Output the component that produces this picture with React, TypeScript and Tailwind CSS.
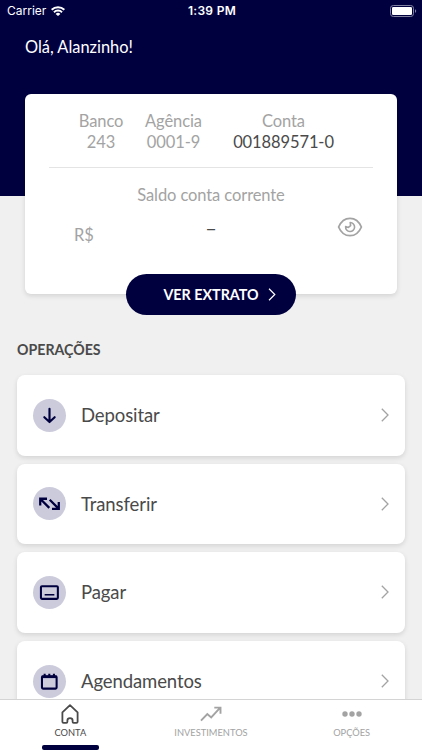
import type { ReactNode } from 'react';

const ChevronRight = ({ className }: { className: string }) => (
  <svg viewBox="0 0 8 14" fill="none" stroke="currentColor" strokeWidth="1.3" className={className}>
    <path d="M0.8 0.8 7 7 0.8 13.2" />
  </svg>
);

const WifiIcon = () => (
  <svg viewBox="0 0 14 10" fill="currentColor" className="h-[10px] w-[14px]">
    <path d="M0 3.1a10 10 0 0 1 14 0L12.7 4.5a8.1 8.1 0 0 0-11.4 0Z" />
    <path d="M2.3 5.5a6.7 6.7 0 0 1 9.4 0L10.4 6.9a4.8 4.8 0 0 0-6.8 0Z" />
    <path d="M4.6 7.9a3.4 3.4 0 0 1 4.8 0L7 10Z" />
  </svg>
);

const BatteryIcon = () => (
  <svg viewBox="0 0 27 12" fill="none" className="h-[12px] w-[27px]">
    <rect x="0.5" y="0.5" width="23" height="11" rx="2.8" stroke="#8080a0" />
    <rect x="2" y="2" width="20" height="8" rx="1.3" fill="#fff" />
    <path d="M25 4.2c1.6.5 1.6 3.1 0 3.6Z" fill="#8080a0" />
  </svg>
);

const EyeIcon = () => (
  <svg viewBox="0 0 26 20" fill="none" stroke="currentColor" strokeWidth="1.8" strokeLinejoin="round" className="h-[20px] w-[26px]">
    <path d="M1.6 10C4 4.3 8 1.3 13 1.3S22 4.3 24.4 10C22 15.7 18 18.7 13 18.7S4 15.7 1.6 10Z" />
    <path d="M13.2 5.5A4.5 4.5 0 1 1 8.6 9.6L11.4 10.4 13.6 8.6Z" strokeWidth="1.6" />
  </svg>
);

const DepositIcon = () => (
  <svg viewBox="0 0 32 32" fill="none" stroke="currentColor" strokeWidth="2.1" strokeLinecap="round" strokeLinejoin="round" className="size-[33px]">
    <path d="M16 9.5V22M11 17.7 16 22.3 21 17.7" />
  </svg>
);

const TransferIcon = () => (
  <svg viewBox="0 0 32 32" fill="none" stroke="currentColor" strokeWidth="2.2" className="size-[33px]">
    <path d="M7 18V11.4H13.6M7.2 11.6 15.8 20.2" />
    <path d="M16.2 12.4 24.8 21M18.4 21.2H25V14.6" />
  </svg>
);

const PayIcon = () => (
  <svg viewBox="0 0 32 32" fill="none" stroke="currentColor" strokeWidth="2" className="size-[33px]">
    <rect x="7.7" y="10" width="16.4" height="12.2" rx="1" />
    <path d="M11.3 18.2H20.7" strokeWidth="1.5" />
  </svg>
);

const ScheduleIcon = () => (
  <svg viewBox="0 0 32 32" fill="none" stroke="currentColor" strokeWidth="2" className="size-[33px]">
    <rect x="8.7" y="10.9" width="14.2" height="12" rx="1" />
    <path d="M8.5 11.5H23.1" strokeWidth="2.4" />
    <path d="M11.3 8.5V12M15.8 8.5V12M20.3 8.5V12" />
  </svg>
);

const HomeIcon = () => (
  <svg viewBox="0 0 18 20" fill="none" stroke="currentColor" strokeWidth="1.8" strokeLinejoin="round" className="h-[20px] w-[18px]">
    <path d="M9 1.2 1.4 8.3V17.7Q1.4 18.8 2.5 18.8H5.4Q6.4 18.8 6.4 17.7V16.6Q6.4 14.2 9 14.2T11.6 16.6V17.7Q11.6 18.8 12.6 18.8H15.5Q16.6 18.8 16.6 17.7V8.3Z" />
  </svg>
);

const InvestIcon = () => (
  <svg viewBox="0 0 22 16" fill="none" stroke="currentColor" strokeWidth="1.9" className="h-[16px] w-[22px]">
    <path d="M1 14.6 7.3 8 11.2 11.5 20 1.9M14.3 1.6H20.5V7.8" />
  </svg>
);

const DotsIcon = () => (
  <svg viewBox="0 0 20 6" fill="currentColor" className="h-[6px] w-[20px]">
    <circle cx="3" cy="3" r="2.7" />
    <circle cx="10" cy="3" r="2.7" />
    <circle cx="17" cy="3" r="2.7" />
  </svg>
);

const OPERATIONS: { label: string; icon: ReactNode }[] = [
  { label: 'Depositar', icon: <DepositIcon /> },
  { label: 'Transferir', icon: <TransferIcon /> },
  { label: 'Pagar', icon: <PayIcon /> },
  { label: 'Agendamentos', icon: <ScheduleIcon /> },
];

const TABS: { label: string; icon: ReactNode; active?: boolean }[] = [
  { label: 'CONTA', icon: <HomeIcon />, active: true },
  { label: 'INVESTIMENTOS', icon: <InvestIcon /> },
  { label: 'OPÇÕES', icon: <DotsIcon /> },
];

function StatusBar() {
  return (
    <div className="grid h-[22px] grid-cols-3 items-center pl-[7px] pr-[5px] font-['Inter',sans-serif] text-[12px] text-white">
      <div className="flex items-center gap-[5px]">
        <span>Carrier</span>
        <WifiIcon />
      </div>
      <span className="text-center font-semibold tracking-[0.3px]">1:39 PM</span>
      <div className="flex justify-end">
        <BatteryIcon />
      </div>
    </div>
  );
}

function AccountCard() {
  return (
    <section className="mx-[25px] -mt-[102px] flex h-[200px] flex-col rounded-[6px] bg-white px-6 pt-[17px] text-[16.5px] leading-[21px] tracking-[-0.1px] text-[#a3a3a3] shadow-[0_2px_5px_rgba(0,0,0,0.12)]">
      <div className="flex h-[57px] shrink-0 whitespace-nowrap border-b border-[#e4e4e4] pl-[29px] text-center">
        <div className="w-[46px]">
          <p>Banco</p>
          <p>243</p>
        </div>
        <div className="ml-[20px] w-[59px]">
          <p>Agência</p>
          <p>0001-9</p>
        </div>
        <div className="ml-[29px] w-[103px]">
          <p>Conta</p>
          <p className="text-[#4a4a4a]">001889571-0</p>
        </div>
      </div>
      <p className="mt-[17px] text-center">Saldo conta corrente</p>
      <div className="mt-[8px] grid grid-cols-[1fr_20px_1fr] pl-[25px] pr-[10px]">
        <span className="pt-[11px]">R$</span>
        <span className="-ml-[15px] pt-[3px] text-center text-[20px] text-[#4a4a4a]">–</span>
        <span className="flex justify-end pt-[3px]">
          <EyeIcon />
        </span>
      </div>
    </section>
  );
}

export default function App() {
  return (
    <div className="flex h-[750px] w-[422px] flex-col overflow-hidden bg-[#f0f0f0] font-['Lato',sans-serif] text-[#4a4a4a]">
      <main className="min-h-0 flex-1 overflow-hidden">
        <header className="h-[196px] bg-[#00003f]">
          <StatusBar />
          <h1 className="mt-[14px] pl-[25px] text-[16.4px] leading-[22px] text-white">Olá, Alanzinho!</h1>
        </header>

        <AccountCard />
        <button className="mx-auto -mt-[20px] flex h-[41px] w-[170px] items-center justify-center gap-[9px] rounded-full bg-[#00003f] pl-[17px] text-[14.3px] font-bold text-white">
          VER EXTRATO
          <ChevronRight className="h-[13px] w-[8px]" />
        </button>

        <section className="px-[17px] pt-[26px]">
          <h2 className="text-[14.2px] font-bold leading-[18px]">OPERAÇÕES</h2>
          <ul className="mt-4 flex flex-col gap-[8px]">
            {OPERATIONS.map((op) => (
              <li
                key={op.label}
                className="flex h-[80.6px] items-center rounded-[8px] bg-white px-4 shadow-[0_2px_5px_rgba(0,0,0,0.12)]"
              >
                <span className="flex size-[33px] items-center justify-center rounded-full bg-[#cbcbdc] text-[#00003f]">
                  {op.icon}
                </span>
                <span className="ml-[15px] flex-1 pt-px text-[18.5px] tracking-[-0.1px]">{op.label}</span>
                <ChevronRight className="h-[14px] w-[8px] text-[#a3a3a3]" />
              </li>
            ))}
          </ul>
        </section>
      </main>

      <nav className="grid h-[51px] shrink-0 grid-cols-3 border-t border-[#d4d4d4] bg-white">
        {TABS.map((tab) => (
          <button
            key={tab.label}
            className={`flex flex-col items-center text-[9.3px] leading-[12px] ${tab.active ? 'text-[#4a4a4a]' : 'text-[#a3a3a3]'}`}
          >
            <span className="flex h-[27px] items-center">{tab.icon}</span>
            <span>{tab.label}</span>
            {tab.active && <span className="mt-[6px] h-[5px] w-[57px] rounded-[2px] bg-[#00003f]" />}
          </button>
        ))}
      </nav>
    </div>
  );
}
